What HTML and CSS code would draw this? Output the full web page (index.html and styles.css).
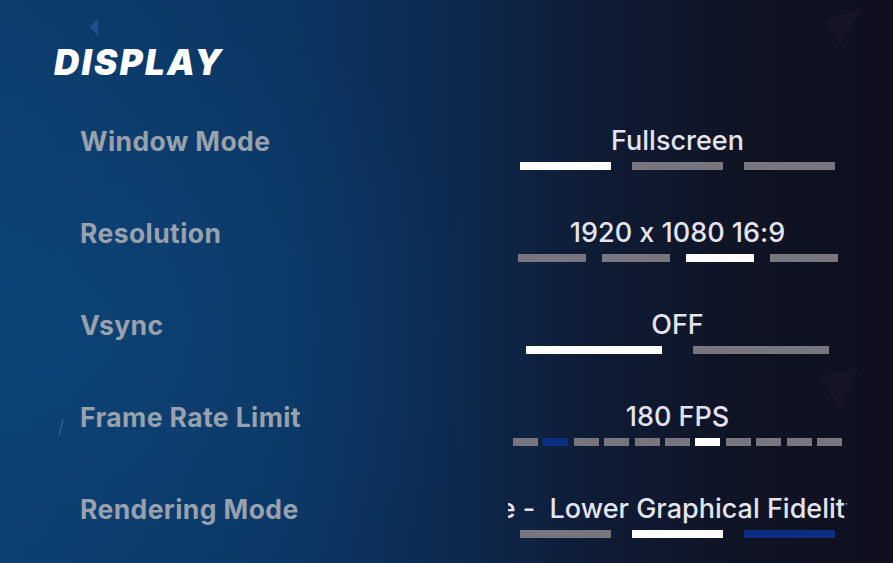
FILE: index.html
```html
<!DOCTYPE html>
<html lang="en">

<head>
    <meta charset="utf-8" />
    <title>Display Settings</title>
    <link rel="stylesheet" href="styles.css">
</head>

<body>
    <div class="main">
        <!-- faint shards in the background -->
        <svg class="shard shard-a" width="12" height="18" viewBox="0 0 12 18"><path d="M10 0 L2 9 L10 18 Z" fill="#1f4f86" /></svg>
        <svg class="shard shard-b" width="40" height="40" viewBox="0 0 40 40"><path d="M38 0 L2 14 L16 38 Z" fill="#161528" /></svg>
        <svg class="shard shard-c" width="42" height="44" viewBox="0 0 42 44"><path d="M40 0 L2 10 L22 42 Z" fill="#151527" /></svg>
        <svg class="shard shard-d" width="6" height="18" viewBox="0 0 6 18"><path d="M5 0 L1 17" stroke="#3c6a9c" stroke-width="1" /></svg>

        <h1 class="title">DISPLAY</h1>

        <div class="settings">
            <div class="row">
                <span class="label">Window Mode</span>
                <div class="control">
                    <span class="value">Fullscreen</span>
                    <div class="bars bars-3">
                        <i class="on"></i><i></i><i></i>
                    </div>
                </div>
            </div>
            <div class="row">
                <span class="label">Resolution</span>
                <div class="control">
                    <span class="value">1920 x 1080 16:9</span>
                    <div class="bars bars-4">
                        <i></i><i></i><i class="on"></i><i></i>
                    </div>
                </div>
            </div>
            <div class="row">
                <span class="label">Vsync</span>
                <div class="control">
                    <span class="value">OFF</span>
                    <div class="bars bars-2">
                        <i class="on"></i><i></i>
                    </div>
                </div>
            </div>
            <div class="row">
                <span class="label">Frame Rate Limit</span>
                <div class="control">
                    <span class="value">180 FPS</span>
                    <div class="bars bars-11">
                        <i></i><i class="mark"></i><i></i><i></i><i></i><i></i><i class="on"></i><i></i><i></i><i></i><i></i>
                    </div>
                </div>
            </div>
            <div class="row">
                <span class="label">Rendering Mode</span>
                <div class="control">
                    <span class="value scroll"><span class="marquee">Performance -&nbsp; Lower Graphical Fidelity</span></span>
                    <div class="bars bars-3">
                        <i></i><i class="on"></i><i class="mark"></i>
                    </div>
                </div>
            </div>
        </div>
    </div>
</body>

</html>
```

FILE: styles.css
```css
html {
    width: 100%;
    height: 100%;
}

body {
    margin: 0px;
    width: 100%;
    height: 100%;
    overflow: hidden;
}

.main {
    position: relative;
    width: 100%;
    height: 100%;
    overflow: hidden;
    background:
        radial-gradient(ellipse 420px 380px at 60px 330px, rgba(14, 75, 130, 0.5), rgba(14, 75, 130, 0) 100%),
        linear-gradient(90deg, #0c3c6c 0%, #0b3562 32%, #0d2a50 50%, #0f1c36 66%, #0f1425 82%, #0f0f1e 100%);
}

.shard {
    position: absolute;
}

.shard-a {
    left: 88px;
    top: 18px;
}

.shard-b {
    left: 824px;
    top: 7px;
}

.shard-c {
    left: 818px;
    top: 367px;
}

.shard-d {
    left: 58px;
    top: 419px;
}

.title {
    margin: 0;
    padding: 42px 0 0 54px;
    font-family: Inter, "Liberation Sans", sans-serif;
    font-size: 35px;
    font-weight: 900;
    font-style: italic;
    letter-spacing: 2.3px;
    line-height: 40px;
    color: #ffffff;
}

.settings {
    padding: 43px 46px 0 80px;
}

.row {
    display: flex;
    align-items: flex-start;
    height: 92px;
}

.label {
    flex: 1;
    font-family: Inter, "Liberation Sans", sans-serif;
    font-size: 26.5px;
    font-weight: 700;
    letter-spacing: 0.4px;
    line-height: 32px;
    color: #98a1ac;
}

.control {
    width: 339px;
    display: flex;
    flex-direction: column;
    align-items: center;
}

.value {
    font-family: Inter, "Liberation Sans", sans-serif;
    font-size: 27px;
    font-weight: 500;
    font-feature-settings: "calt" 0;
    line-height: 32px;
    color: #e4e4ee;
    white-space: nowrap;
}

.value.scroll {
    width: 100%;
    overflow: hidden;
}

.marquee {
    display: inline-block;
    margin-left: -160px;
}

.bars {
    display: flex;
    margin-top: 5px;
}

.bars i {
    display: block;
    height: 8px;
    background: #77767f;
}

.bars i.on {
    background: #ffffff;
}

.bars i.mark {
    background: #0c2f82;
}

.bars-3 {
    gap: 21px;
}

.bars-3 i {
    width: 91px;
}

.bars-4 {
    gap: 16px;
}

.bars-4 i {
    width: 68px;
}

.bars-2 {
    gap: 31px;
}

.bars-2 i {
    width: 136px;
}

.bars-11 {
    gap: 5.4px;
}

.bars-11 i {
    width: 25px;
}
```
